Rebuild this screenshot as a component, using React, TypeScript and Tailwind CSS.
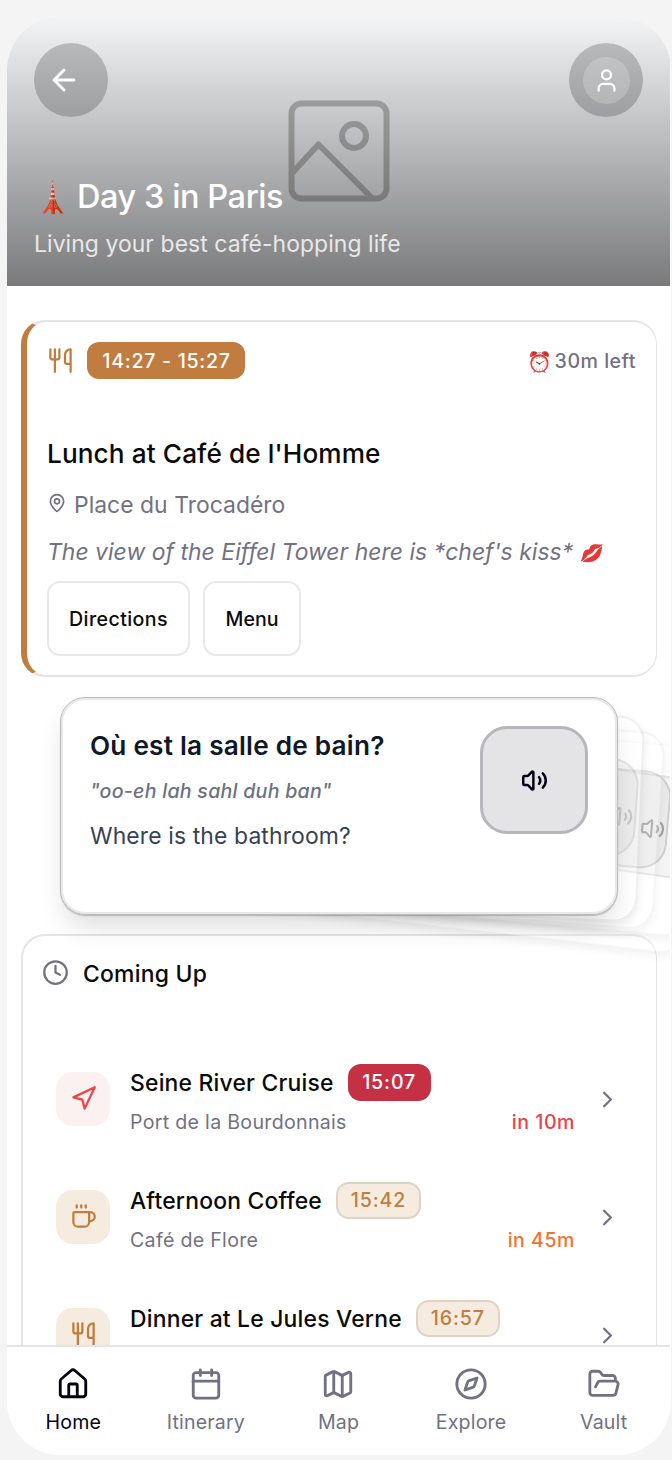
import type { ReactNode } from "react";
import {
  ArrowLeft,
  Calendar,
  ChevronRight,
  Clock,
  Coffee,
  Compass,
  FolderOpen,
  House,
  Map as MapIcon,
  MapPin,
  Navigation,
  User,
  Utensils,
  Volume2,
} from "lucide-react";

function Header() {
  return (
    <header className="relative h-[270px] shrink-0 overflow-hidden bg-gray-100">
      <svg
        className="absolute left-[281px] top-[84px] h-[102px] w-[102px]"
        viewBox="0 0 102 102"
        fill="none"
        stroke="#b8b8b8"
        strokeWidth="6"
        strokeLinecap="round"
        strokeLinejoin="round"
      >
        <rect x="3.5" y="3.5" width="95" height="95" rx="10" />
        <circle cx="66" cy="36" r="12" />
        <path d="M4 73 30.5 44.500 84 98" />
      </svg>
      <div className="absolute inset-0 bg-linear-to-b/srgb from-black/0 to-black/50" />
      <div className="relative flex h-full flex-col justify-between px-[27px] pt-[27px] pb-6">
        <div className="flex items-center justify-between">
          <button className="flex size-[74px] items-center rounded-full bg-black/20 pl-[13px] text-white">
            <ArrowLeft className="size-[34px]" />
          </button>
          <button className="flex size-[74px] items-center justify-center rounded-full bg-black/20 text-white">
            <span className="flex size-[47px] items-center justify-center rounded-full bg-white/20">
              <User className="size-[27px]" />
            </span>
          </button>
        </div>
        <div>
          <h1 className="flex h-[50px] items-center text-[32.5px] font-medium leading-[50px] tracking-[-0.43px] text-white">
            <span className="mr-[9px] w-[34px] text-center text-[30px] tracking-normal">🗼</span>
            Day 3 in Paris
          </h1>
          <p className="mt-[4px] text-[22.9px] leading-[36px] tracking-[0.08px] text-white/80">
            Living your best café-hopping life
          </p>
        </div>
      </div>
    </header>
  );
}

function CurrentActivity() {
  return (
    <section className="mr-[13px] ml-[14px] mt-[34px] h-[357px] rounded-[24px] border-2 border-r border-l-[6px] border-[#e5e5e5] border-l-[#c17d3f] pt-[20px] pr-[20px] pl-[20px]">
      <div className="flex h-[37px] items-center justify-between">
        <div className="flex items-center gap-[13px]">
          <Utensils className="size-[27px] text-[#c17d3f]" />
          <span className="flex h-[37px] w-[158px] items-center justify-center rounded-[12px] bg-[#c17d3f] pt-0.5 pl-px text-[19.6px] font-medium tracking-[0.7px] text-white">
            14:27 - 15:27
          </span>
        </div>
        <span className="flex items-center pt-0.5 text-[19.6px] font-medium tracking-[0.5px] text-[#717182]">
          <span className="mr-[3px] text-[20px] tracking-normal">⏰</span>30m left
        </span>
      </div>
      <h2 className="mt-[54px] text-[26.2px] font-medium leading-[41px] tracking-[0.1px] text-[#0a0a0a]">
        Lunch at Café de l'Homme
      </h2>
      <p className="mt-[13px] flex h-[36px] items-center text-[22.9px] leading-[36px] tracking-[0.03px] text-[#717182]">
        <MapPin className="mr-[7px] -mt-[5px] size-[20px]" />
        Place du Trocadéro
      </p>
      <p className="mt-[11px] h-[36px] whitespace-nowrap text-[22.9px] italic leading-[36px] tracking-[0.04px] text-[#717182]">
        The view of the Eiffel Tower here is *chef's kiss* <span className="relative -top-px text-[17px]">💋</span>
      </p>
      <div className="mt-[11px] flex gap-[13px]">
        <button className="h-[75px] w-[143px] rounded-[13px] border-2 border-[#e8e8e8] pt-0.5 text-[19.6px] font-medium tracking-[0.4px] text-[#0a0a0a]">
          Directions
        </button>
        <button className="h-[75px] w-[98px] rounded-[13px] border-2 border-[#e8e8e8] pt-0.5 text-[19.6px] font-medium text-[#0a0a0a]">
          Menu
        </button>
      </div>
    </section>
  );
}

function PhraseDeck() {
  return (
    <section className="relative z-10 mt-[20px] h-[218px]">
      {/* Cards waiting behind the front one, fanned out to the right */}
      <div className="absolute left-[88px] top-[44px] h-[180px] w-[600px] rotate-[6.5deg] rounded-[24px] border border-black/3 bg-white/40 shadow-[0_4px_10px_rgba(0,0,0,0.06)]" />
      <div className="absolute left-[150px] top-[27px] h-[190px] w-[540px] rotate-[5deg] rounded-[24px] border border-black/3 bg-white/40 shadow-[0_4px_10px_rgba(0,0,0,0.06)]" />
      <div className="absolute left-[562px] top-[76px] h-[101px] w-[150px] rotate-[8deg] rounded-[24px] border-2 border-black/8 bg-black/4" />
      <div className="absolute left-[578px] top-[72px] flex h-[98px] w-[84px] rotate-[5deg] items-center justify-end rounded-[26px] border-2 border-black/12 bg-black/4 text-black/32">
        <Volume2 className="mt-4 mr-px size-[25px]" />
      </div>
      <div className="absolute left-[546px] top-[60px] flex h-[98px] w-[84px] rotate-[4deg] items-center justify-end rounded-[26px] border-2 border-black/12 bg-black/5 text-black/28">
        <Volume2 className="mt-4 mr-px size-[25px]" />
      </div>
      <div className="absolute left-[147px] top-[18px] h-[198px] w-[506px] rotate-[4deg] rounded-[24px] border-2 border-black/4 bg-white/20 shadow-[0_4px_10px_rgba(0,0,0,0.06)]" />
      <div className="absolute left-[234px] top-[11px] h-[206px] w-[400px] rotate-[2.5deg] rounded-[24px] border-2 border-black/6 bg-white/25 shadow-[0_4px_10px_rgba(0,0,0,0.08)]" />

      <article className="relative ml-[53px] flex h-[218px] w-[558px] justify-between rounded-[25px] border border-[#bcbcc0] bg-white pt-[28px] pr-[29px] pl-[29px] shadow-[inset_0_0_0_2px_#e8e8e8,0_1px_1px_rgba(0,0,0,0.2),0_16px_28px_-6px_rgba(0,0,0,0.15)]">
        <div>
          <h3 className="-mt-px text-[26.2px] font-semibold leading-[41px] tracking-[0.22px] text-[#101828]">
            Où est la salle de bain?
          </h3>
          <p className="mt-[10px] text-[19.6px] font-medium italic leading-[30px] tracking-[0.25px] text-[#6a7282]">
            "oo-eh lah sahl duh ban"
          </p>
          <p className="mt-[12px] text-[22.9px] leading-[36px] tracking-[0.13px] text-[#364153]">
            Where is the bathroom?
          </p>
        </div>
        <button className="flex size-[108px] items-center justify-center rounded-[27px] border-[3px] border-[#b6b6bc] bg-[#e4e4e6] text-[#030213]">
          <Volume2 className="size-[27px]" strokeWidth={2.2} />
        </button>
      </article>
    </section>
  );
}

type RowProps = {
  icon: ReactNode;
  title: string;
  place?: string;
  time: string;
  left?: string;
  tile: string;
  badge: string;
  leftColor?: string;
};

function UpcomingRow({ icon, title, place, time, left, tile, badge, leftColor = "" }: RowProps) {
  return (
    <li className="flex h-[71px] items-center">
      <span className={`-mt-0.5 flex size-[54px] shrink-0 items-center justify-center rounded-[17px] ${tile}`}>
        {icon}
      </span>
      <div className="ml-[20px] w-[445px]">
        <div className="flex h-[37px] items-center gap-[14px]">
          <h4 className="pt-0.5 text-[22.9px] font-medium tracking-[0.2px] text-[#0a0a0a]">{title}</h4>
          <span
            className={`flex h-[37px] items-center justify-center rounded-[13px] text-[19.6px] font-medium tracking-[0.85px] ${badge}`}
          >
            {time}
          </span>
        </div>
        <div className="mt-[7px] flex h-[27px] justify-between text-[19.6px] leading-[28px]">
          <span className="tracking-[0.3px] text-[#717182]">{place}</span>
          <span className={`font-medium tracking-[0.5px] ${leftColor}`}>{left}</span>
        </div>
      </div>
      <ChevronRight className="ml-[19px] size-[27px] text-[#717182]" />
    </li>
  );
}

function ComingUp() {
  return (
    <section className="mr-[13px] ml-[14px] mt-[19px] h-[520px] rounded-[24px] border-2 border-r border-[#e5e5e5] pt-[20px]">
      <h2 className="flex h-[36px] items-center gap-[14px] pl-[19px] text-[22.9px] font-medium tracking-[0.25px] text-[#0a0a0a]">
        <Clock className="-mt-[3px] size-[27px] text-[#717182]" />
        Coming Up
      </h2>
      <ul className="mt-[72px] flex flex-col gap-[47px] pl-[33px]">
        <UpcomingRow
          icon={<Navigation className="size-[27px]" />}
          title="Seine River Cruise"
          place="Port de la Bourdonnais"
          time="15:07"
          left="in 10m"
          tile="bg-[#fcf1f1] text-[#ee4444]"
          badge="w-[83px] bg-[#c53044] pt-px text-white"
          leftColor="text-[#e7434a]"
        />
        <UpcomingRow
          icon={<Coffee className="size-[27px]" />}
          title="Afternoon Coffee"
          place="Café de Flore"
          time="15:42"
          left="in 45m"
          tile="bg-[#f6ebdf] text-[#c17d3f]"
          badge="w-[85px] border-2 border-[#ddd3c7] bg-[#f6ebdf] pt-px text-[#c17d3f]"
          leftColor="text-[#ed752f]"
        />
        <UpcomingRow
          icon={<Utensils className="size-[27px]" />}
          title="Dinner at Le Jules Verne"
          time="16:57"
          tile="bg-[#f6ebdf] text-[#c17d3f]"
          badge="w-[84px] border-2 border-[#ddd3c7] bg-[#f6ebdf] text-[#c17d3f]"
        />
      </ul>
    </section>
  );
}

const TABS = [
  { label: "Home", Icon: House, color: "text-[#030213]" },
  { label: "Itinerary", Icon: Calendar, color: "text-[#717182]" },
  { label: "Map", Icon: MapIcon, color: "text-[#717182]" },
  { label: "Explore", Icon: Compass, color: "text-[#717182]" },
  { label: "Vault", Icon: FolderOpen, color: "text-[#717182]" },
];

function TabBar() {
  return (
    <nav className="relative z-20 grid h-[110px] shrink-0 grid-cols-5 border-t-2 border-[#e5e5e5] bg-white">
      {TABS.map(({ label, Icon, color }) => (
        <button key={label} className={`flex flex-col items-center pt-[20px] ${color}`}>
          <Icon className="size-[34px]" />
          <span className="mt-[8px] text-[19.6px] leading-[27px] tracking-[0.17px]">{label}</span>
        </button>
      ))}
    </nav>
  );
}

export default function App() {
  return (
    <div className="h-[1460px] w-[672px] overflow-hidden bg-[#f4f4f4] pt-4 pl-[7px] font-['Inter',sans-serif]">
      <div className="flex h-[1439px] w-[664px] flex-col overflow-hidden rounded-[54px] bg-white pr-px">
        <Header />
        <main className="min-h-0 flex-1 overflow-hidden">
          <CurrentActivity />
          <PhraseDeck />
          <ComingUp />
        </main>
        <TabBar />
      </div>
    </div>
  );
}
